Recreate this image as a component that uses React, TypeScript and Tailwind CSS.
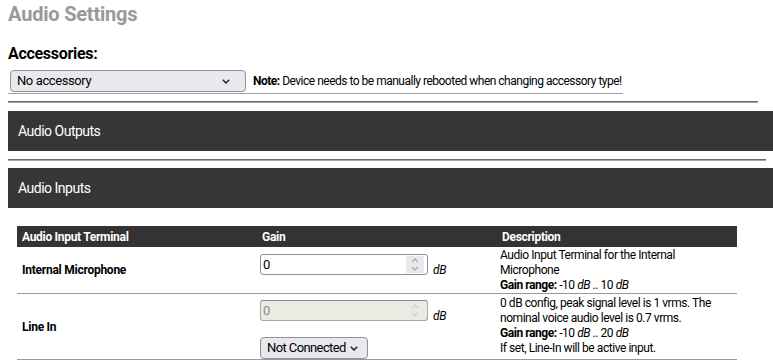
import React from "react";

function Chevron({ up = false, className = "" }: { up?: boolean; className?: string }) {
  return (
    <svg width="8" height="5" viewBox="0 0 8 5" className={className} fill="none">
      {up ? (
        <polyline points="1,4.2 4,1 7,4.2" stroke="currentColor" strokeWidth="1.2" />
      ) : (
        <polyline points="1,0.8 4,4 7,0.8" stroke="currentColor" strokeWidth="1.2" />
      )}
    </svg>
  );
}

function SelectChevron() {
  return (
    <svg width="8" height="5" viewBox="0 0 8 5" fill="none" className="text-[#1b1b1b]">
      <polyline points="0.8,0.8 4,4 7.2,0.8" stroke="currentColor" strokeWidth="1.4" />
    </svg>
  );
}

function NumberBox({ disabled = false }: { disabled?: boolean }) {
  return (
    <div
      className={
        "relative w-[168px] h-[21px] rounded-[3px] border " +
        (disabled
          ? "bg-[#ebebe4] border-[#a9a9a9] border-t-[#8a8a8a] text-[#8d8d8d]"
          : "bg-white border-[#8f8f9d] text-black")
      }
    >
      <div className="pl-[2px] text-[13px] leading-[19px] tracking-[-0.3px]">0</div>
      <div
        className={
          "absolute right-[3px] top-[1px] bottom-[1px] w-[18px] flex flex-col items-center justify-center gap-[3px] " +
          (disabled ? "text-[#d0d0d0]" : "bg-[#e9e9ed] text-[#a8a8a8]")
        }
      >
        <Chevron up />
        <Chevron />
      </div>
    </div>
  );
}

function DB() {
  return <span className="italic text-[12px] tracking-[-0.4px] ml-[5px]">dB</span>;
}

export default function App() {
  return (
    <div className="font-['Roboto',sans-serif] text-black bg-white w-[773px] h-[360px] overflow-hidden">
      <div className="px-2">
        <h1 className="pt-[2px] text-[20px] leading-[24px] font-bold text-[#999999] tracking-[-0.2px]">
          Audio Settings
        </h1>
        <h2 className="mt-[18px] text-[16px] leading-[20px] font-bold tracking-[-0.3px]">Accessories:</h2>
        <div className="mt-[6px] inline-flex items-center gap-[7px] pl-[2px] pb-[1px] border-b border-[#a0a0a0]">
          <div className="relative w-[236px] h-[22px] rounded-[4px] border border-[#8f8f9d] bg-[#e9e9ed] flex items-center justify-between pl-[6px] pr-[15px]">
            <span className="text-[13px] tracking-[-0.4px]">No accessory</span>
            <SelectChevron />
          </div>
          <div className="text-[12px] tracking-[-0.5px] pr-[1px]">
            <span className="font-bold">Note:</span> Device needs to be manually rebooted when changing accessory type!
          </div>
        </div>
        <div className="mt-[7px] h-[2px] mr-[7px] border-t border-[#6a6a6a] border-b border-b-[#a6a6a6]" />
      </div>

      <div className="mt-[8px] ml-2 h-[40px] bg-[#363636] flex items-center pl-[10px]">
        <span className="text-white text-[14px] tracking-[-0.5px]">Audio Outputs</span>
      </div>

      <div className="mt-[8px] mx-2 mr-[7px] h-[2px] border-t border-[#6a6a6a] border-b border-b-[#a6a6a6]" />

      <div className="mt-[7px] ml-2 h-[40px] bg-[#363636] flex items-center pl-[10px]">
        <span className="text-white text-[14px] tracking-[-0.5px]">Audio Inputs</span>
      </div>

      <div className="mt-[18px] ml-[17px] w-[720px]">
        <div className="grid grid-cols-3 h-[21px] bg-[#333333] text-white text-[12px] font-bold tracking-[-0.3px] items-center">
          <div className="pl-[5px]">Audio Input Terminal</div>
          <div className="pl-[5px]">Gain</div>
          <div className="pl-[5px]">Description</div>
        </div>

        <div className="grid grid-cols-3 border-b border-[#999999]">
          <div className="pl-[5px] flex items-center text-[12px] font-bold tracking-[-0.25px]">Internal Microphone</div>
          <div className="pl-[3px] pt-[7px] flex items-start">
            <NumberBox />
            <span className="mt-[3px]">
              <DB />
            </span>
          </div>
          <div className="pl-[3px] pt-[1px] text-[12px] leading-[15px] tracking-[-0.45px]">
            <div className="whitespace-nowrap">Audio Input Terminal for the Internal</div>
            <div className="whitespace-nowrap">Microphone</div>
            <div className="whitespace-nowrap">
              <span className="font-bold">Gain range:</span> -10 <i>dB</i> .. 10 <i>dB</i>
            </div>
          </div>
        </div>

        <div className="grid grid-cols-3 border-b border-[#999999]">
          <div className="pl-[5px] flex items-center text-[12px] font-bold tracking-[-0.25px]">Line In</div>
          <div className="pl-[3px] pt-[6px] flex flex-col items-start gap-[10px]">
            <div className="flex items-start">
              <NumberBox disabled />
              <span className="mt-[3px]">
                <DB />
              </span>
            </div>
            <div className="w-[108px] h-[22px] rounded-[4px] border border-[#8f8f9d] bg-[#e9e9ed] flex items-center justify-between pl-[6px] pr-[9px]">
              <span className="text-[13px] tracking-[-0.6px]">Not Connected</span>
              <SelectChevron />
            </div>
          </div>
          <div className="pl-[3px] pt-[2px] text-[12px] leading-[15px] tracking-[-0.45px]">
            <div className="whitespace-nowrap">0 dB config, peak signal level is 1 vrms. The</div>
            <div className="whitespace-nowrap">nominal voice audio level is 0.7 vrms.</div>
            <div className="whitespace-nowrap">
              <span className="font-bold">Gain range:</span> -10 <i>dB</i> .. 20 <i>dB</i>
            </div>
            <div className="whitespace-nowrap">If set, Line-In will be active input.</div>
          </div>
        </div>
      </div>
    </div>
  );
}
